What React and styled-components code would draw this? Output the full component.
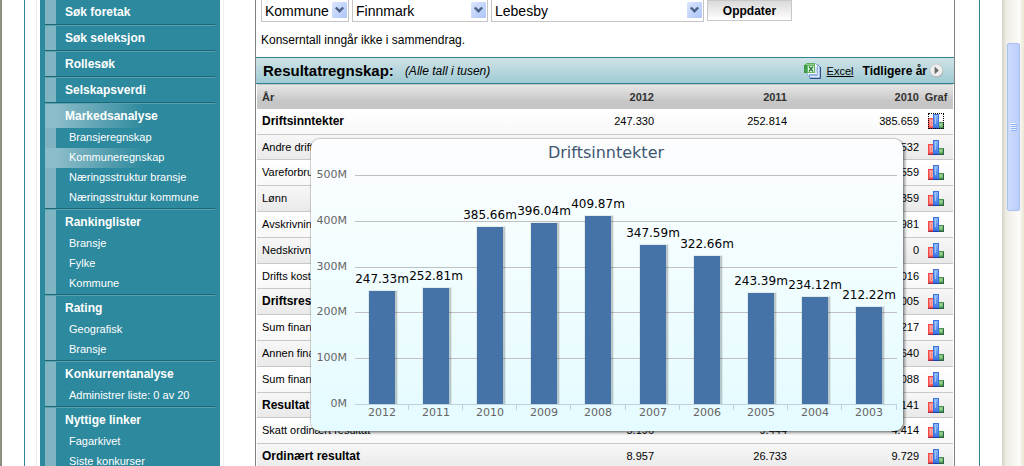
import React, { Component } from 'react';
import styled, { createGlobalStyle } from 'styled-components';

const GlobalStyle = createGlobalStyle`
    html, body {
        margin: 0;
        padding: 0;
        overflow: hidden;
    }
    body {
        background: white;
        color: #000000;
        font-family: Arial, "Liberation Sans", sans-serif;
        font-size: 11px;
    }
`

const menu = [
    { name: 'Søk foretak' },
    { name: 'Søk seleksjon' },
    { name: 'Rollesøk' },
    { name: 'Selskapsverdi' },
    {
        name: 'Markedsanalyse',
        active: true,
        current: 'Kommuneregnskap',
        items: ['Bransjeregnskap', 'Kommuneregnskap', 'Næringsstruktur bransje', 'Næringsstruktur kommune']
    },
    { name: 'Rankinglister', items: ['Bransje', 'Fylke', 'Kommune'] },
    { name: 'Rating', items: ['Geografisk', 'Bransje'] },
    { name: 'Konkurrentanalyse', items: ['Administrer liste: 0 av 20'] },
    { name: 'Nyttige linker', items: ['Fagarkivet', 'Siste konkurser'] }
]

const rows = [
    { name: 'Driftsinntekter', bold: true, values: ['247.330', '252.814', '385.659'] },
    { name: 'Andre driftsinnt.', values: ['', '', '532'] },
    { name: 'Vareforbruk', values: ['', '', '559'] },
    { name: 'Lønn', values: ['', '', '359'] },
    { name: 'Avskrivning', values: ['', '', '981'] },
    { name: 'Nedskrivning', values: ['', '', '0'] },
    { name: 'Drifts kostnader', values: ['', '', '016'] },
    { name: 'Driftsresultat', bold: true, values: ['', '', '005'] },
    { name: 'Sum finansinnt.', values: ['', '', '217'] },
    { name: 'Annen finans', values: ['', '', '640'] },
    { name: 'Sum finanskost.', values: ['', '', '088'] },
    { name: 'Resultat før skatt', bold: true, values: ['', '', '141'] },
    { name: 'Skatt ordinært resultat', values: ['5.196', '9.444', '4.414'] },
    { name: 'Ordinært resultat', bold: true, values: ['8.957', '26.733', '9.729'] }
]

const series = [
    { year: '2012', value: 247.33 },
    { year: '2011', value: 252.81 },
    { year: '2010', value: 385.66 },
    { year: '2009', value: 396.04 },
    { year: '2008', value: 409.87 },
    { year: '2007', value: 347.59 },
    { year: '2006', value: 322.66 },
    { year: '2005', value: 243.39 },
    { year: '2004', value: 234.12 },
    { year: '2003', value: 212.22 }
]

const Page = styled.div`
    display: flex;
    height: 100vh;
    box-sizing: border-box;
    overflow: hidden;
    border-left: 2px solid #8f8d80;
`

const Frame = styled.div`
    flex: 1;
    display: flex;
    margin: 0 22px;
    border-left: 1px solid #2e8291;
    border-right: 1px solid #2e8291;
`

const Sidebar = styled.nav`
    flex: none;
    width: 180px;
    margin-left: 11px;
    padding: 0 3px;
    border-left: 1px solid #eeeeee;
    border-right: 1px solid #eeeeee;
`

const MenuPanel = styled.div`
    min-height: 100%;
    padding: 0 5px;
    background: #2d899d;
`

const MenuGroup = styled.div`
    background: linear-gradient(to right, #80b4c2 11px, transparent 11px);

    & + & {
        border-top: 1px solid #1f6776;
    }

    & + & > a:first-child {
        border-top: 1px solid #57a1b1;
    }
`

const MenuLink = styled.a`
    display: block;
    height: ${props => props.$sub ? '20px' : '24px'};
    line-height: ${props => props.$sub ? '19px' : '24px'};
    padding-left: ${props => props.$sub ? '24px' : '20px'};
    font-size: ${props => props.$sub ? '11px' : '12px'};
    font-weight: ${props => props.$sub ? 'normal' : 'bold'};
    color: white;
    text-decoration: none;
    white-space: nowrap;
    background: ${props => props.$active ? 'linear-gradient(to right, #8bbcc9 12px, #2d899d 100px)' : 'none'};
`

const Main = styled.main`
    flex: 1;
    margin: 0 24px 0 31px;
    border-left: 1px solid #808080;
    border-right: 1px solid #808080;
`

const Filters = styled.form`
    display: flex;
    gap: 3px;
    height: 22px;
    padding-left: 5px;
`

const SelectBox = styled.div`
    position: relative;
    width: ${props => props.$width};

    select {
        appearance: none;
        box-sizing: border-box;
        width: 100%;
        height: 22px;
        padding: 0 3px;
        border: 1px solid #c4c4c4;
        border-top: none;
        border-radius: 0;
        background: white;
        color: #000000;
        font: 14px Arial, "Liberation Sans", sans-serif;
    }

    svg {
        position: absolute;
        top: 2px;
        right: 2px;
        pointer-events: none;
    }
`

const UpdateButton = styled.button`
    width: 85px;
    height: 21px;
    padding: 0;
    border: 1px solid #c8c8c8;
    background: linear-gradient(#dadada, #ffffff);
    color: #000000;
    font: bold 12px Arial, "Liberation Sans", sans-serif;
`

const Note = styled.p`
    margin: 0;
    height: 35px;
    padding-left: 5px;
    font-size: 12px;
    line-height: 36px;
`

const TitleBar = styled.header`
    display: flex;
    align-items: center;
    height: 25px;
    padding: 0 10px 0 7px;
    border-top: 1px solid #2e8291;
    border-bottom: 1px solid #2e8291;
    background: linear-gradient(#cfe3e7, #a0cad3);

    h2 {
        margin: 0 11px 0 0;
        font-size: 15px;
    }

    em {
        flex: 1;
        font-size: 12px;
    }
`

const ExcelLink = styled.a`
    margin: 0 9px 0 6px;
    color: #000000;
    font-size: 11px;
`

const EarlierLink = styled.a`
    display: flex;
    align-items: center;
    gap: 2px;
    color: #000000;
    font-size: 12px;
    font-weight: bold;
    text-decoration: none;
    white-space: nowrap;
`

const TableWrap = styled.div`
    position: relative;
    padding: 0 1px;
`

const Table = styled.table`
    width: 100%;
    border-collapse: separate;
    border-spacing: 0;
    table-layout: fixed;

    th, td {
        padding: 0 0 1px;
        text-align: right;
        white-space: nowrap;
    }

    th:first-child {
        padding-left: 5px;
        text-align: left;
    }

    th:last-child, td:last-child {
        text-align: center;
    }
`

const HeadRow = styled.tr`
    height: 25px;
    background: linear-gradient(#e8e8e8, #c6c6c6 70%);
    color: #333333;

    th {
        border-top: 1px solid #c4c4c4;
    }
`

const Row = styled.tr`
    height: 26px;
    background: linear-gradient(#ffffff, #f8f8f8);

    &:nth-child(even) {
        background: linear-gradient(#f7f7f7, #e9e9e9);
    }

    &:nth-child(5n + 2) {
        height: 25px;
    }

    th, td {
        border-bottom: 1px solid #c8c8c8;
    }

    th {
        font-size: ${props => props.$bold ? '12px' : '11px'};
        font-weight: ${props => props.$bold ? 'bold' : 'normal'};
    }
`

const GraphButton = styled.button`
    display: block;
    width: 16px;
    height: 16px;
    margin: 0 auto;
    padding: 0;
    border: none;
    background: none;
    outline: ${props => props.$selected ? '1px dotted #000000' : 'none'};
    outline-offset: -1px;

    svg {
        display: block;
    }
`

const ChartPopup = styled.figure`
    position: absolute;
    top: 55px;
    left: 55px;
    width: 592px;
    height: 292px;
    margin: 0;
    border-radius: 9px;
    background: linear-gradient(#fdfdff, #f0fdff 50%, #e4fbff);
    box-shadow: 0 0 1px 1px rgba(100, 100, 100, 0.3), 2px 2px 3px rgba(0, 0, 0, 0.4);

    svg {
        display: block;
    }

    text {
        font-family: Verdana, "DejaVu Sans", sans-serif;
    }
`

const Scrollbar = styled.div`
    flex: none;
    box-sizing: border-box;
    width: 22px;
    padding: 43px 3px 0 5px;
    border-right: 1px solid #ece9d8;
    background: linear-gradient(to right, #d5d2c6, #edece4 4px, #fdfdfb 18px, #f1efe4 19px);
`

const Thumb = styled.div`
    display: flex;
    align-items: center;
    justify-content: center;
    box-sizing: border-box;
    height: 168px;
    border: 1px solid #a9bfec;
    border-radius: 2px;
    background: linear-gradient(to right, #cbdafe, #bccffc);
`

const SelectArrow = () => (
    <svg width="15" height="16" viewBox="0 0 15 16">
        <defs>
            <linearGradient id="arrowFill" x1="0" y1="0" x2="1" y2="1">
                <stop offset="0" stopColor="#dbe6ff" />
                <stop offset="1" stopColor="#adc5f8" />
            </linearGradient>
        </defs>
        <rect x="0" y="0" width="15" height="16" rx="1" fill="url(#arrowFill)" />
        <path d="M3.8 5.5 L7.5 9.2 L11.2 5.5" fill="none" stroke="#4d6185" strokeWidth="2.4" />
    </svg>
)

const GraphIcon = () => (
    <svg width="16" height="16" viewBox="0 0 16 16">
        <defs>
            <linearGradient id="redBar" x1="0" y1="0" x2="0" y2="1">
                <stop offset="0" stopColor="#ff8f8a" />
                <stop offset="1" stopColor="#ff6460" />
            </linearGradient>
            <linearGradient id="blueBar" x1="0" y1="0" x2="0" y2="1">
                <stop offset="0" stopColor="#8db9f7" />
                <stop offset="1" stopColor="#3e78e6" />
            </linearGradient>
            <linearGradient id="greenBar" x1="0" y1="0" x2="0" y2="1">
                <stop offset="0" stopColor="#8fca8a" />
                <stop offset="1" stopColor="#5fae62" />
            </linearGradient>
        </defs>
        <rect x="0.5" y="5.5" width="5" height="9" fill="url(#redBar)" stroke="#f24a4a" />
        <path d="M2.5 7.5v5h2v-5z" fill="none" stroke="#ffa9a2" />
        <rect x="10.5" y="9.5" width="5" height="5" fill="url(#greenBar)" stroke="#4b9355" />
        <path d="M12.5 11.5h1v1h-1z" fill="none" stroke="#a3d69b" />
        <rect x="5.5" y="1.5" width="5" height="13" fill="url(#blueBar)" stroke="#3a72de" />
        <path d="M7.5 3v8" stroke="#a0c6fa" />
        <path d="M0 15.5h5" stroke="#9a3052" />
        <path d="M5 15.5h6" stroke="#1c3fb4" />
        <path d="M11 15.5h5M15.5 10v5" stroke="#2c6443" />
    </svg>
)

const ExcelIcon = () => (
    <svg width="17" height="17" viewBox="0 0 17 17">
        <path d="M5.5 2.5h8l2.5 2.5v11H5.5z" fill="#dce8fb" stroke="#6a8dcb" />
        <path d="M3.5 1.5h8l2 2v10h-10z" fill="#f6faff" stroke="#9bb6e2" />
        <path d="M11.5 6h2M11.5 8h2M11.5 10h2M5 12.5h8" stroke="#8db0e6" />
        <path d="M0.5 3.5l2-2h8v2z" fill="#8ccf83" stroke="#5db05f" />
        <rect x="0.5" y="3.5" width="3" height="7" fill="#3ea447" stroke="#3a9642" />
        <rect x="3.5" y="3.5" width="7" height="7" fill="#eef8eb" stroke="#6bb56c" />
        <path d="M5 4.5l4 5M9 4.5l-4 5" stroke="#2d8439" strokeWidth="1.5" />
        <path d="M6 16.5h10.5V5" fill="none" stroke="#31518f" />
    </svg>
)

const EarlierIcon = () => (
    <svg width="15" height="15" viewBox="0 0 15 15">
        <circle cx="7.5" cy="7.8" r="6.6" fill="#9a9a9a" />
        <circle cx="7.3" cy="7.3" r="6.3" fill="#efefef" stroke="#c4c4c4" strokeWidth="0.7" />
        <path d="M5.6 3.6v7.6l4.2-3.8z" fill="#686868" />
    </svg>
)

const Chart = () => {
    const left = 44
    const step = 54.2
    const bottom = 265
    const barTop = (value) => bottom - value * 0.458

    return (
        <svg width="592" height="292" viewBox="0 0 592 292">
            <text x="295" y="19" textAnchor="middle" fontSize="16" fill="#3e576f">Driftsinntekter</text>
            {[500, 400, 300, 200, 100, 0].map(v => {
                const y = Math.round(barTop(v)) + 0.5
                return (
                    <g key={v}>
                        <path d={`M${left} ${y}H586`} stroke={v ? '#c0c0c0' : '#c0d0e0'} />
                        <text x="36" y={y + 2.5} textAnchor="end" fontSize="11" fill="#666666">{v}M</text>
                    </g>
                )
            })}
            {series.map((s, i) => {
                const x = Math.floor(left + 14 + i * step)
                const y = Math.round(barTop(s.value))
                const tick = Math.floor(left + (i + 1) * step) - 0.5
                return (
                    <g key={s.year}>
                        <rect x={x - 1} y={y - 1} width="30" height={bottom - y + 1} rx="1" fill="#000000" opacity="0.07" />
                        <rect x={x} y={y} width="28" height={bottom - y} fill="#000000" opacity="0.15" />
                        <rect x={x} y={y} width="26" height={bottom - y} fill="#4572a7" />
                        <path d={`M${tick} ${bottom + 1}v5`} stroke="#c0d0e0" />
                        <text x={x + 13} y="277" textAnchor="middle" fontSize="11" fill="#666666">{s.year}</text>
                    </g>
                )
            })}
            {series.map((s, i) => (
                <text key={s.year} x={Math.floor(left + 27 + i * step)} y={Math.round(barTop(s.value)) - 8} textAnchor="middle" fontSize="12" fill="#000000">
                    {s.value.toFixed(2)}m
                </text>
            ))}
        </svg>
    )
}

class App extends Component {

    state = {
        selected: 'Driftsinntekter'
    }

    HandleClick = (name) => {
        this.setState({ selected: name })
    }

    render() {
        return (
            <Page>
                <GlobalStyle />
                <Frame>
                    <Sidebar>
                        <MenuPanel>
                            {menu.map(group =>
                                <MenuGroup key={group.name}>
                                    <MenuLink href="#" $active={group.active}>{group.name}</MenuLink>
                                    {(group.items || []).map(item =>
                                        <MenuLink key={item} href="#" $sub $active={group.current === item}>{item}</MenuLink>
                                    )}
                                </MenuGroup>
                            )}
                        </MenuPanel>
                    </Sidebar>
                    <Main>
                        <Filters onSubmit={e => e.preventDefault()}>
                            <SelectBox $width="88px">
                                <select aria-label="Type"><option>Kommune</option></select>
                                <SelectArrow />
                            </SelectBox>
                            <SelectBox $width="136px">
                                <select aria-label="Fylke"><option>Finnmark</option></select>
                                <SelectArrow />
                            </SelectBox>
                            <SelectBox $width="213px">
                                <select aria-label="Kommune"><option>Lebesby</option></select>
                                <SelectArrow />
                            </SelectBox>
                            <UpdateButton type="submit">Oppdater</UpdateButton>
                        </Filters>
                        <Note>Konserntall inngår ikke i sammendrag.</Note>
                        <TitleBar>
                            <h2>Resultatregnskap:</h2>
                            <em>(Alle tall i tusen)</em>
                            <ExcelIcon />
                            <ExcelLink href="#">Excel</ExcelLink>
                            <EarlierLink href="#">Tidligere år <EarlierIcon /></EarlierLink>
                        </TitleBar>
                        <TableWrap>
                            <Table>
                                <colgroup>
                                    <col />
                                    <col width="133" />
                                    <col width="133" />
                                    <col width="132" />
                                    <col width="34" />
                                </colgroup>
                                <thead>
                                    <HeadRow>
                                        <th>År</th>
                                        <th>2012</th>
                                        <th>2011</th>
                                        <th>2010</th>
                                        <th>Graf</th>
                                    </HeadRow>
                                </thead>
                                <tbody>
                                    {rows.map(row =>
                                        <Row key={row.name} $bold={row.bold}>
                                            <th scope="row">{row.name}</th>
                                            {row.values.map((v, i) => <td key={i}>{v}</td>)}
                                            <td>
                                                <GraphButton
                                                    type="button"
                                                    aria-label={row.name}
                                                    $selected={this.state.selected === row.name}
                                                    onClick={() => this.HandleClick(row.name)}
                                                >
                                                    <GraphIcon />
                                                </GraphButton>
                                            </td>
                                        </Row>
                                    )}
                                </tbody>
                            </Table>
                            <ChartPopup>
                                <Chart />
                            </ChartPopup>
                        </TableWrap>
                    </Main>
                </Frame>
                <Scrollbar>
                    <Thumb>
                        <svg width="7" height="9" viewBox="0 0 7 9">
                            <path d="M0 0.5h6M0 2.5h6M0 4.5h6M0 6.5h6" stroke="#eef4fe" />
                            <path d="M1 1.5h6M1 3.5h6M1 5.5h6M1 7.5h6" stroke="#8cb0f8" />
                        </svg>
                    </Thumb>
                </Scrollbar>
            </Page>
        );
    }
}

export default App;
